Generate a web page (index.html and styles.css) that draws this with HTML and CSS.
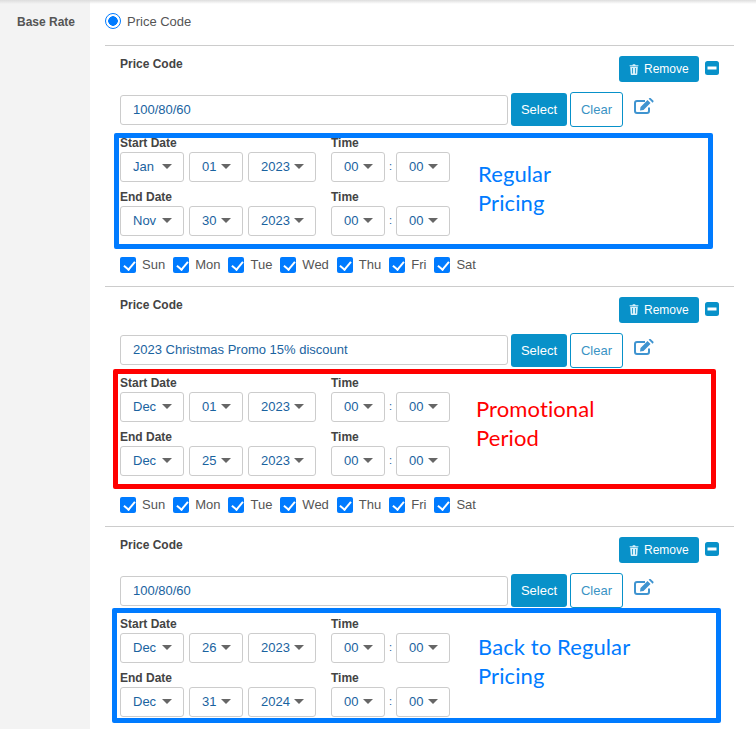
FILE: index.html
```html
<!DOCTYPE html>
<html lang="en">
<head>
    <meta charset="UTF-8">
    <meta name="viewport" content="width=device-width, initial-scale=1.0">
    <title>Base Rate</title>
    <link rel="stylesheet" href="styles.css">
</head>
<body>
    <div class="page">
        <div class="side"><span class="side-label">Base Rate</span></div>
        <div class="main">
            <div class="radio-row">
                <span class="radio"></span>
                <span>Price Code</span>
            </div>

            <div class="code-section">
                <div class="code-head">
                    <span class="code-label">Price Code</span>
                    <button class="remove-btn">
                        <svg class="trash" viewBox="0 0 10 11"><path d="M3.4 1.2 3.9.3h2.2l.5.9H9.4v1H.6v-1zM1.2 2.8h7.6l-.5 7.4a.8.8 0 0 1-.8.7H2.500a.8.8 0 0 1-.8-.7zM3.200 4v5.600h.8V4zm2.800 0v5.600h.8V4z"/></svg>
                        Remove
                    </button>
                    <svg class="collapse" viewBox="0 0 14 14"><rect width="14" height="14" rx="2.500"/><rect class="bar" x="2.500" y="5.500" width="9" height="3"/></svg>
                </div>
                <div class="code-input-row">
                    <div class="code-input">100/80/60</div>
                    <button class="select-btn">Select</button>
                    <button class="clear-btn">Clear</button>
                    <svg class="edit" viewBox="0 0 20 16"><path class="edit-box" d="M15 9.500v3.500a2 2 0 0 1-2 2H3a2 2 0 0 1-2-2V5a2 2 0 0 1 2-2h8"/><path class="edit-pen" d="M6 12.500l.5-3.500L13.500 2l3 3-7 7zM14.700 .8l.8-.8h1l3 2.800v1l-.9.9z"/></svg>
                </div>
                <div class="date-rows">
                    <div class="date-row">
                        <div class="date-col">
                            <label>Start Date</label>
                            <div class="picks">
                                <div class="pick month">Jan<i></i></div>
                                <div class="pick day">01<i></i></div>
                                <div class="pick year">2023<i></i></div>
                            </div>
                        </div>
                        <div class="date-col">
                            <label>Time</label>
                            <div class="picks">
                                <div class="pick time">00<i></i></div>
                                <span class="colon">:</span>
                                <div class="pick time">00<i></i></div>
                            </div>
                        </div>
                    </div>
                    <div class="date-row">
                        <div class="date-col">
                            <label>End Date</label>
                            <div class="picks">
                                <div class="pick month">Nov<i></i></div>
                                <div class="pick day">30<i></i></div>
                                <div class="pick year">2023<i></i></div>
                            </div>
                        </div>
                        <div class="date-col">
                            <label>Time</label>
                            <div class="picks">
                                <div class="pick time">00<i></i></div>
                                <span class="colon">:</span>
                                <div class="pick time">00<i></i></div>
                            </div>
                        </div>
                    </div>
                </div>
                <div class="days">
                    <span class="day-check"><b></b>Sun</span>
                    <span class="day-check"><b></b>Mon</span>
                    <span class="day-check"><b></b>Tue</span>
                    <span class="day-check"><b></b>Wed</span>
                    <span class="day-check"><b></b>Thu</span>
                    <span class="day-check"><b></b>Fri</span>
                    <span class="day-check"><b></b>Sat</span>
                </div>
                <div class="note note-regular">Regular<br>Pricing</div>
            </div>

            <div class="code-section">
                <div class="code-head">
                    <span class="code-label">Price Code</span>
                    <button class="remove-btn">
                        <svg class="trash" viewBox="0 0 10 11"><path d="M3.4 1.2 3.9.3h2.2l.5.9H9.4v1H.6v-1zM1.2 2.8h7.6l-.5 7.4a.8.8 0 0 1-.8.7H2.500a.8.8 0 0 1-.8-.7zM3.200 4v5.600h.8V4zm2.800 0v5.600h.8V4z"/></svg>
                        Remove
                    </button>
                    <svg class="collapse" viewBox="0 0 14 14"><rect width="14" height="14" rx="2.500"/><rect class="bar" x="2.500" y="5.500" width="9" height="3"/></svg>
                </div>
                <div class="code-input-row">
                    <div class="code-input">2023 Christmas Promo 15% discount</div>
                    <button class="select-btn">Select</button>
                    <button class="clear-btn">Clear</button>
                    <svg class="edit" viewBox="0 0 20 16"><path class="edit-box" d="M15 9.500v3.500a2 2 0 0 1-2 2H3a2 2 0 0 1-2-2V5a2 2 0 0 1 2-2h8"/><path class="edit-pen" d="M6 12.500l.5-3.500L13.500 2l3 3-7 7zM14.700 .8l.8-.8h1l3 2.800v1l-.9.9z"/></svg>
                </div>
                <div class="date-rows">
                    <div class="date-row">
                        <div class="date-col">
                            <label>Start Date</label>
                            <div class="picks">
                                <div class="pick month">Dec<i></i></div>
                                <div class="pick day">01<i></i></div>
                                <div class="pick year">2023<i></i></div>
                            </div>
                        </div>
                        <div class="date-col">
                            <label>Time</label>
                            <div class="picks">
                                <div class="pick time">00<i></i></div>
                                <span class="colon">:</span>
                                <div class="pick time">00<i></i></div>
                            </div>
                        </div>
                    </div>
                    <div class="date-row">
                        <div class="date-col">
                            <label>End Date</label>
                            <div class="picks">
                                <div class="pick month">Dec<i></i></div>
                                <div class="pick day">25<i></i></div>
                                <div class="pick year">2023<i></i></div>
                            </div>
                        </div>
                        <div class="date-col">
                            <label>Time</label>
                            <div class="picks">
                                <div class="pick time">00<i></i></div>
                                <span class="colon">:</span>
                                <div class="pick time">00<i></i></div>
                            </div>
                        </div>
                    </div>
                </div>
                <div class="days">
                    <span class="day-check"><b></b>Sun</span>
                    <span class="day-check"><b></b>Mon</span>
                    <span class="day-check"><b></b>Tue</span>
                    <span class="day-check"><b></b>Wed</span>
                    <span class="day-check"><b></b>Thu</span>
                    <span class="day-check"><b></b>Fri</span>
                    <span class="day-check"><b></b>Sat</span>
                </div>
                <div class="note note-promo">Promotional<br>Period</div>
            </div>

            <div class="code-section">
                <div class="code-head">
                    <span class="code-label">Price Code</span>
                    <button class="remove-btn">
                        <svg class="trash" viewBox="0 0 10 11"><path d="M3.4 1.2 3.9.3h2.2l.5.9H9.4v1H.6v-1zM1.2 2.8h7.6l-.5 7.4a.8.8 0 0 1-.8.7H2.500a.8.8 0 0 1-.8-.7zM3.200 4v5.600h.8V4zm2.800 0v5.600h.8V4z"/></svg>
                        Remove
                    </button>
                    <svg class="collapse" viewBox="0 0 14 14"><rect width="14" height="14" rx="2.500"/><rect class="bar" x="2.500" y="5.500" width="9" height="3"/></svg>
                </div>
                <div class="code-input-row">
                    <div class="code-input">100/80/60</div>
                    <button class="select-btn">Select</button>
                    <button class="clear-btn">Clear</button>
                    <svg class="edit" viewBox="0 0 20 16"><path class="edit-box" d="M15 9.500v3.500a2 2 0 0 1-2 2H3a2 2 0 0 1-2-2V5a2 2 0 0 1 2-2h8"/><path class="edit-pen" d="M6 12.500l.5-3.500L13.500 2l3 3-7 7zM14.700 .8l.8-.8h1l3 2.800v1l-.9.9z"/></svg>
                </div>
                <div class="date-rows">
                    <div class="date-row">
                        <div class="date-col">
                            <label>Start Date</label>
                            <div class="picks">
                                <div class="pick month">Dec<i></i></div>
                                <div class="pick day">26<i></i></div>
                                <div class="pick year">2023<i></i></div>
                            </div>
                        </div>
                        <div class="date-col">
                            <label>Time</label>
                            <div class="picks">
                                <div class="pick time">00<i></i></div>
                                <span class="colon">:</span>
                                <div class="pick time">00<i></i></div>
                            </div>
                        </div>
                    </div>
                    <div class="date-row">
                        <div class="date-col">
                            <label>End Date</label>
                            <div class="picks">
                                <div class="pick month">Dec<i></i></div>
                                <div class="pick day">31<i></i></div>
                                <div class="pick year">2024<i></i></div>
                            </div>
                        </div>
                        <div class="date-col">
                            <label>Time</label>
                            <div class="picks">
                                <div class="pick time">00<i></i></div>
                                <span class="colon">:</span>
                                <div class="pick time">00<i></i></div>
                            </div>
                        </div>
                    </div>
                </div>
                <div class="note note-back">Back to Regular<br>Pricing</div>
            </div>
        </div>
    </div>
</body>
</html>
```

FILE: styles.css
```css
:root {
    --brand: #0891c9;
    --annotate-blue: #007bff;
    --annotate-red: #ff0000;
    --line: #cccccc;
    --field-text: #1a63a0;
}

* {
    margin: 0;
    padding: 0;
    box-sizing: border-box;
    font-family: "Liberation Sans", Arial, sans-serif;
}

html, body {
    height: 100%;
    overflow: hidden;
    background: #fff;
    color: #444;
}

.page {
    display: flex;
    height: 100%;
    position: relative;
}

/* soft shadow from the header above the crop */
.page::before {
    content: "";
    position: absolute;
    top: 0;
    left: 0;
    right: 0;
    height: 4px;
    background: linear-gradient(#dddddd, rgba(221, 221, 221, 0));
}

.side {
    width: 90px;
    flex: none;
    background: #f3f3f3;
    padding: 12px 0 0 17px;
}

.side-label {
    font-size: 12px;
    font-weight: bold;
    line-height: 14px;
    color: #555;
}

.main {
    flex: 1;
    padding: 0 22px 0 15px;
    min-width: 0;
}

.radio-row {
    display: flex;
    align-items: center;
    gap: 6px;
    height: 45.49px;
    padding-bottom: 3px;
    font-size: 13px;
    color: #555;
}

.radio {
    width: 16px;
    height: 16px;
    border-radius: 50%;
    border: 1px solid #007bff;
    background: radial-gradient(circle, #007bff 0, #007bff 4.500px, #fff 5px);
}

.code-section {
    position: relative;
    border-top: 1px solid var(--line);
    height: 240.500px;
    padding-left: 15px;
}

.code-section:last-child {
    height: auto;
}

.code-head {
    display: flex;
    align-items: flex-start;
    height: 46px;
    padding-top: 10px;
}

.code-label {
    font-size: 12px;
    font-weight: bold;
    line-height: 14px;
    margin-top: 1px;
}

.remove-btn {
    display: flex;
    align-items: center;
    gap: 5px;
    margin-left: auto;
    width: 80px;
    height: 26px;
    padding-left: 10px;
    border: none;
    border-radius: 3px;
    background: var(--brand);
    color: #fff;
    font-size: 12px;
}

.trash {
    width: 10px;
    height: 11px;
    fill: #d8f1fb;
}

.collapse {
    width: 14px;
    height: 14px;
    margin: 5px 15px 0 6px;
    fill: var(--brand);
}

.collapse .bar {
    fill: #fff;
}

.code-input-row {
    display: flex;
    align-items: center;
    height: 35px;
}

.code-input {
    width: 388px;
    height: 30px;
    padding-left: 12px;
    border: 1px solid var(--line);
    border-radius: 3px;
    font-size: 13px;
    line-height: 28px;
    color: var(--field-text);
}

.select-btn {
    width: 56px;
    height: 33px;
    margin-left: 3px;
    border: none;
    border-radius: 3px;
    background: var(--brand);
    color: #fff;
    font-size: 13px;
}

.clear-btn {
    width: 53px;
    height: 35px;
    margin-left: 3px;
    border: 1px solid var(--brand);
    border-radius: 3px;
    background: #fff;
    color: #3a93c4;
    font-size: 13px;
}

.edit {
    width: 20px;
    height: 16px;
    margin: -7px 0 0 11px;
    overflow: visible;
}

.edit-box {
    fill: none;
    stroke: #3f94d0;
    stroke-width: 2;
}

.edit-pen {
    fill: #3f94d0;
}

.date-rows {
    display: flex;
    flex-direction: column;
    gap: 8px;
    padding-top: 8.450px;
}

.date-row {
    display: flex;
    gap: 15px;
}

.date-col label {
    display: block;
    font-size: 12px;
    font-weight: bold;
    line-height: 14px;
    margin-bottom: 2px;
}

.picks {
    display: flex;
    gap: 4px;
}

.pick {
    display: flex;
    align-items: center;
    justify-content: space-between;
    height: 30px;
    padding: 0 11px 1px 12px;
    border: 1px solid var(--line);
    border-radius: 3px;
    font-size: 13px;
    color: var(--field-text);
}

.pick i {
    width: 0;
    height: 0;
    border-left: 5px solid transparent;
    border-right: 5px solid transparent;
    border-top: 5px solid #666;
}

.month { width: 64px; margin-right: 1px; }
.day { width: 54px; margin-right: 1px; }
.year { width: 68px; }
.time { width: 54px; }

.colon {
    width: 3px;
    font-size: 11px;
    line-height: 29px;
    color: var(--field-text);
}

.days {
    display: flex;
    gap: 8px;
    margin-top: 20.950px;
}

.day-check {
    display: flex;
    align-items: center;
    gap: 6px;
    font-size: 13px;
    line-height: 16px;
    color: #555;
}

.day-check b {
    position: relative;
    width: 16px;
    height: 16px;
    border-radius: 2px;
    background: #007bff;
}

.day-check b::after {
    content: "";
    position: absolute;
    left: 5.500px;
    top: 2px;
    width: 5px;
    height: 9px;
    border: solid #fff;
    border-width: 0 2.500px 2.500px 0;
    transform: rotate(40deg);
}

/* hand-drawn annotation frames laid over the form */
.note {
    position: absolute;
    border: 5px solid var(--annotate-blue);
    border-radius: 2px;
    font-family: Lato, sans-serif;
    font-size: 22px;
    line-height: 29px;
    letter-spacing: 0.1px;
    color: var(--annotate-blue);
}

.note-regular {
    left: 9px;
    top: 87px;
    width: 599px;
    height: 116px;
    padding: 21px 0 0 359px;
}

.note-promo {
    left: 8px;
    top: 82px;
    width: 603px;
    height: 120px;
    padding: 20px 0 0 358px;
    border-color: var(--annotate-red);
    color: var(--annotate-red);
}

.note-back {
    left: 7px;
    top: 81px;
    width: 609px;
    height: 115px;
    padding: 19px 0 0 361px;
}
```
